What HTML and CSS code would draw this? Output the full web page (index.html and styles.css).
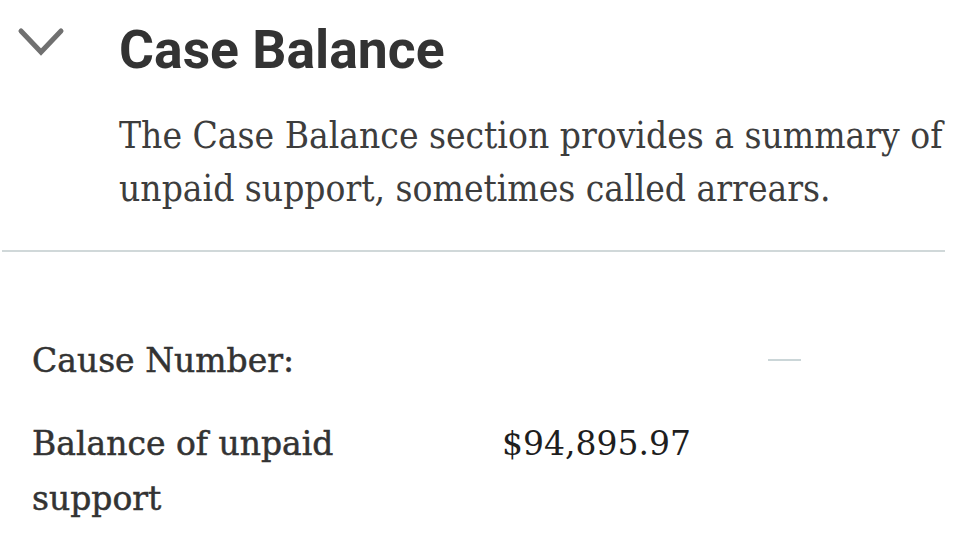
FILE: index.html
```html
<!DOCTYPE html>
<html lang="en">
<head>
<meta charset="utf-8">
<title>Case Balance</title>
<link rel="stylesheet" href="styles.css">
</head>
<body>
<section class="panel">
  <header class="panel-head">
    <svg class="chevron" width="50" height="34" viewBox="0 0 50 34" aria-hidden="true">
      <polyline points="5,5 25,26 45,5" fill="none" stroke="#707070" stroke-width="5" stroke-linecap="round" stroke-linejoin="miter"/>
    </svg>
    <h2 class="title">Case Balance</h2>
  </header>
  <p class="desc">The Case Balance section provides a summary of unpaid support, sometimes called arrears.</p>
  <hr class="divider">
  <dl class="details">
    <div class="row">
      <dt class="label">Cause Number:</dt>
      <dd class="value"><span class="empty"></span></dd>
    </div>
    <div class="row">
      <dt class="label">Balance of unpaid support</dt>
      <dd class="value amount">$94,895.97</dd>
    </div>
  </dl>
</section>
</body>
</html>
```
FILE: styles.css
```css
html, body {
  margin: 0;
  padding: 0;
  background: #ffffff;
}
body {
  width: 962px;
  height: 547px;
  overflow: hidden;
}
.panel {
  padding-top: 22px;
}
.panel-head {
  display: flex;
  align-items: flex-start;
}
.chevron {
  flex: none;
  margin: 4px 53px 0 16px;
}
.title {
  margin: 0;
  font-family: Roboto, "Liberation Sans", sans-serif;
  font-weight: 700;
  font-size: 53.5px;
  line-height: 56px;
  color: #333333;
}
.desc {
  margin: 31px 0 0 119px;
  width: 843px;
  font-family: "DejaVu Serif Condensed", "DejaVu Serif", serif;
  font-stretch: condensed;
  font-size: 36.8px;
  line-height: 53px;
  color: #3d3d3d;
}
.divider {
  margin: 35px 17px 0 2px;
  border: 0;
  height: 2px;
  background: #d0d8d9;
}
.details {
  margin: 81px 0 0 32px;
}
.row {
  display: grid;
  grid-template-columns: 470px 1fr;
  margin-bottom: 28px;
}
.label {
  margin: 0;
  width: 330px;
  font-family: "DejaVu Serif", serif;
  font-size: 33px;
  line-height: 55px;
  color: #333333;
  -webkit-text-stroke: 0.5px #333333;
}
.value {
  margin: 0;
  font-family: "DejaVu Serif", serif;
  font-size: 33px;
  line-height: 55px;
  color: #1e1e1e;
}
.empty {
  display: block;
  width: 33px;
  height: 2px;
  margin: 26px 0 0 266px;
  background: #cbd6d8;
}
```
